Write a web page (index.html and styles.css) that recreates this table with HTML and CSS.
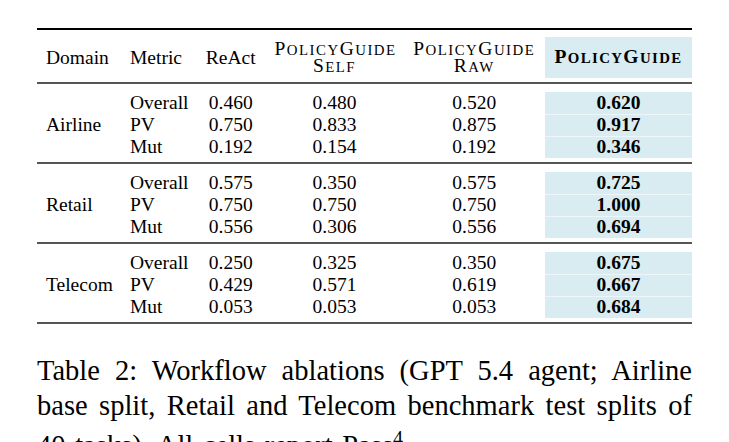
FILE: index.html
```html
<!DOCTYPE html>
<html lang="en">
<head>
<meta charset="utf-8">
<title>Table 2: Workflow ablations</title>
<link rel="stylesheet" href="styles.css">
</head>
<body>
<figure class="figure">
  <table class="ablation">
    <colgroup>
      <col class="c-domain">
      <col class="c-metric">
      <col class="c-react">
      <col class="c-self">
      <col class="c-raw">
      <col class="c-full">
    </colgroup>
    <thead>
      <tr class="pad pad-top"><td colspan="6"></td></tr>
      <tr class="head">
        <th class="left">Domain</th>
        <th class="left">Metric</th>
        <th>ReAct</th>
        <th><span class="sc line">P<span class="lc">olicy</span>G<span class="lc">uide</span></span><span class="sc line">S<span class="lc">elf</span></span></th>
        <th><span class="sc line">P<span class="lc">olicy</span>G<span class="lc">uide</span></span><span class="sc line">R<span class="lc">aw</span></span></th>
        <th class="hl"><span class="sc bold">P<span class="lc">olicy</span>G<span class="lc">uide</span></span></th>
      </tr>
      <tr class="pad pad-bottom"><td colspan="6"></td></tr>
    </thead>
    <tbody class="group">
      <tr class="pad pad-top"><td colspan="6"></td></tr>
      <tr class="row">
        <td class="left domain" rowspan="3">Airline</td>
        <td class="left">Overall</td><td>0.460</td><td>0.480</td><td>0.520</td><td class="hl best">0.620</td>
      </tr>
      <tr class="row">
        <td class="left">PV</td><td>0.750</td><td>0.833</td><td>0.875</td><td class="hl best split">0.917</td>
      </tr>
      <tr class="row">
        <td class="left">Mut</td><td>0.192</td><td>0.154</td><td>0.192</td><td class="hl best split">0.346</td>
      </tr>
      <tr class="pad pad-bottom"><td colspan="6"></td></tr>
    </tbody>
    <tbody class="group">
      <tr class="pad pad-top"><td colspan="6"></td></tr>
      <tr class="row">
        <td class="left domain" rowspan="3">Retail</td>
        <td class="left">Overall</td><td>0.575</td><td>0.350</td><td>0.575</td><td class="hl best">0.725</td>
      </tr>
      <tr class="row">
        <td class="left">PV</td><td>0.750</td><td>0.750</td><td>0.750</td><td class="hl best split">1.000</td>
      </tr>
      <tr class="row">
        <td class="left">Mut</td><td>0.556</td><td>0.306</td><td>0.556</td><td class="hl best split">0.694</td>
      </tr>
      <tr class="pad pad-bottom"><td colspan="6"></td></tr>
    </tbody>
    <tbody class="group last">
      <tr class="pad pad-top"><td colspan="6"></td></tr>
      <tr class="row">
        <td class="left domain" rowspan="3">Telecom</td>
        <td class="left">Overall</td><td>0.250</td><td>0.325</td><td>0.350</td><td class="hl best">0.675</td>
      </tr>
      <tr class="row">
        <td class="left">PV</td><td>0.429</td><td>0.571</td><td>0.619</td><td class="hl best split">0.667</td>
      </tr>
      <tr class="row">
        <td class="left">Mut</td><td>0.053</td><td>0.053</td><td>0.053</td><td class="hl best split">0.684</td>
      </tr>
      <tr class="pad pad-bottom"><td colspan="6"></td></tr>
    </tbody>
  </table>
  <figcaption class="caption">Table 2: Workflow ablations (GPT 5.4 agent; Airline base split, Retail and Telecom benchmark test splits of 40&nbsp;tasks). All cells report Pass<sup class="pow">4</sup>.</figcaption>
</figure>
</body>
</html>
```

FILE: styles.css
```css
html, body {
  margin: 0;
  padding: 0;
  background: #ffffff;
}

body {
  font-family: "Liberation Serif", "Times New Roman", serif;
  color: #000000;
}

.figure {
  margin: 0;
  padding: 28px 37px 0;
}

/* ---------- table ---------- */
.ablation {
  width: 655px;
  table-layout: fixed;
  border-collapse: collapse;
  border-top: 2px solid #000000;
  border-bottom: 2px solid #000000;
  font-size: 19.5px;
}

.c-domain { width: 84px; }
.c-metric { width: 75px; }
.c-react  { width: 69.5px; }
.c-self   { width: 138px; }
.c-raw    { width: 141.5px; }
.c-full   { width: 147px; }

.ablation thead {
  border-bottom: 2px solid #555555;
}

.group {
  border-bottom: 2px solid #555555;
}

.ablation th,
.ablation td {
  padding: 0 9px;
  text-align: center;
  vertical-align: middle;
  font-weight: 400;
  white-space: nowrap;
}

.ablation .left {
  text-align: left;
}

.pad td {
  padding: 0;
}

thead .pad-top td { height: 7px; }
thead .pad-bottom td { height: 4px; }
.group .pad-top td { height: 8px; }
.group .pad-bottom td { height: 4px; }

.head th {
  height: 41px;
  line-height: 22px;
}

.row td {
  height: 22px;
  line-height: 22px;
}

.hl {
  background: #d8ecf1;
}

.split {
  box-shadow: inset 0 1px 0 rgba(255, 255, 255, 0.55);
}

.best {
  font-weight: 700 !important;
}

/* small capitals, LaTeX style */
.sc {
  letter-spacing: 1.5px;
}

.sc .lc {
  font-size: 0.76em;
  text-transform: uppercase;
}

.sc.line {
  display: block;
  line-height: 16px;
}

.sc.bold {
  font-weight: 700;
  letter-spacing: 1.4px;
}

/* ---------- caption ---------- */
.caption {
  margin: 30px 0 0;
  font-size: 28.5px;
  line-height: 34.5px;
  word-spacing: 2.5px;
  text-align: justify;
  hyphens: none;
}

.pow {
  font-size: 0.7em;
  line-height: 1.6;
  vertical-align: 0.5em;
}
```
